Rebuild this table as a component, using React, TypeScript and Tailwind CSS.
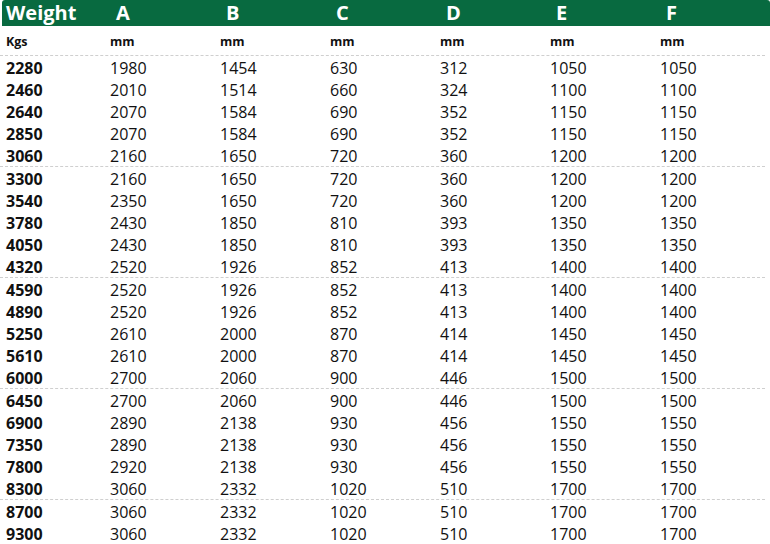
const cols = ['A', 'B', 'C', 'D', 'E', 'F'];

const rows: number[][] = [
  [2280, 1980, 1454, 630, 312, 1050, 1050],
  [2460, 2010, 1514, 660, 324, 1100, 1100],
  [2640, 2070, 1584, 690, 352, 1150, 1150],
  [2850, 2070, 1584, 690, 352, 1150, 1150],
  [3060, 2160, 1650, 720, 360, 1200, 1200],
  [3300, 2160, 1650, 720, 360, 1200, 1200],
  [3540, 2350, 1650, 720, 360, 1200, 1200],
  [3780, 2430, 1850, 810, 393, 1350, 1350],
  [4050, 2430, 1850, 810, 393, 1350, 1350],
  [4320, 2520, 1926, 852, 413, 1400, 1400],
  [4590, 2520, 1926, 852, 413, 1400, 1400],
  [4890, 2520, 1926, 852, 413, 1400, 1400],
  [5250, 2610, 2000, 870, 414, 1450, 1450],
  [5610, 2610, 2000, 870, 414, 1450, 1450],
  [6000, 2700, 2060, 900, 446, 1500, 1500],
  [6450, 2700, 2060, 900, 446, 1500, 1500],
  [6900, 2890, 2138, 930, 456, 1550, 1550],
  [7350, 2890, 2138, 930, 456, 1550, 1550],
  [7800, 2920, 2138, 930, 456, 1550, 1550],
  [8300, 3060, 2332, 1020, 510, 1700, 1700],
  [8700, 3060, 2332, 1020, 510, 1700, 1700],
  [9300, 3060, 2332, 1020, 510, 1700, 1700],
];

export default function App() {
  return (
    <div
      className="w-[770px] h-[544px] bg-white overflow-hidden text-[#111]"
      style={{ fontFamily: '"Open Sans", "Noto Sans", sans-serif' }}
    >
      <div className="grid grid-cols-[110px_repeat(6,110px)] h-[26px] items-center bg-[#086a40] rounded-t-[3px] ml-[2px] text-white font-bold">
        <div className="pl-[4px] text-[20px] leading-none">Weight</div>
        {cols.map((c) => (
          <div key={c} className="pl-[4px] text-[20px] leading-none">
            {c}
          </div>
        ))}
      </div>
      <div className="grid grid-cols-[110px_repeat(6,110px)] h-[30px] pt-[3px] items-center font-bold text-[12.5px] border-b border-dashed border-[#cfcfcf] mr-[5px]">
        <div className="pl-[6px]">Kgs</div>
        {cols.map((c) => (
          <div key={c}>mm</div>
        ))}
      </div>
      {rows.map((r, i) => (
        <div
          key={r[0]}
          className={
            'grid grid-cols-[110px_repeat(6,110px)] items-center text-[16px] leading-none mr-[5px] pt-[1px] ' +
            (i % 5 === 4 ? 'h-[23px] border-b border-dashed border-[#cfcfcf]' : 'h-[22px]')
          }
        >
          <div className="pl-[6px] font-bold">{r[0]}</div>
          {r.slice(1).map((v, j) => (
            <div key={j}>{v}</div>
          ))}
        </div>
      ))}
    </div>
  );
}
